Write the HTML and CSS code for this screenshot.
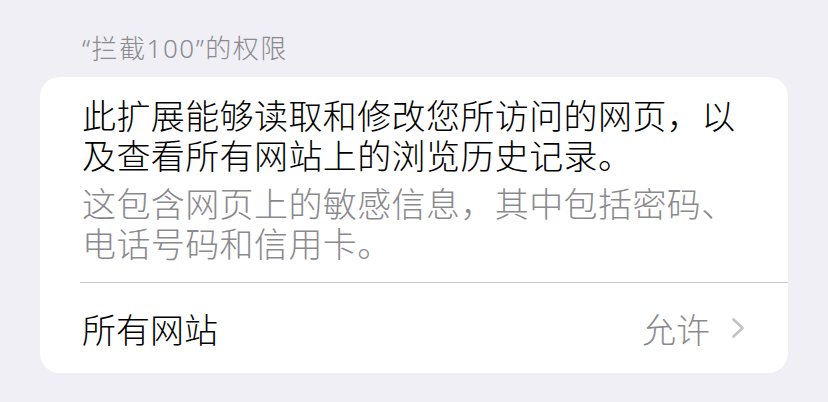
FILE: index.html
```html
<!DOCTYPE html>
<html lang="zh-CN">
<head>
<meta charset="utf-8">
<link rel="stylesheet" href="styles.css">
</head>
<body>
<div class="page">
  <div class="section-title">“拦截100”的权限</div>
  <div class="card">
    <div class="info">
      <p class="primary">此扩展能够读取和修改您所访问的网页，以及查看所有网站上的浏览历史记录。</p>
      <p class="secondary">这包含网页上的敏感信息，其中包括密码、电话号码和信用卡。</p>
    </div>
    <div class="row">
      <span class="row-label">所有网站</span>
      <span class="row-value">允许
        <svg class="chevron" width="16" height="22" viewBox="0 0 16 22"><path d="M3.5 2.5 L12.5 11 L3.5 19.5" fill="none" stroke="#c4c4c7" stroke-width="2.8" stroke-linecap="round" stroke-linejoin="round"/></svg>
      </span>
    </div>
  </div>
</div>
</body>
</html>
```

FILE: styles.css
```css
html, body {
  margin: 0;
  padding: 0;
  background: #f0eff5;
}
body {
  font-family: "Noto Sans CJK SC", "Noto Sans", sans-serif;
  width: 828px;
  height: 402px;
  overflow: hidden;
}
.page {
  padding: 31px 40px 0 40px;
}
.section-title {
  padding-left: 42px;
  font-family: "Noto Sans", "Noto Sans CJK SC", sans-serif;
  font-weight: 300;
  font-size: 26px;
  line-height: 34px;
  letter-spacing: 1.5px;
  color: #8a8a8e;
  height: 46px;
}
.card {
  background: #ffffff;
  border-radius: 20px;
  width: 748px;
  overflow: hidden;
}
.info {
  padding: 18px 40px 19px 2px;
  border-bottom: 1px solid #c8c8cb;
  margin-left: 40px;
}
.info p {
  margin: 0;
  font-size: 34px;
  line-height: 40px;
  letter-spacing: 0.4px;
  font-weight: 300;
}
.primary {
  color: #000000;
}
.secondary {
  color: #8a8a8e;
  margin-top: 8px !important;
}
.row {
  height: 90px;
  display: flex;
  align-items: center;
  justify-content: space-between;
  padding: 0 42px 0 42px;
}
.row-label {
  font-size: 34px;
  font-weight: 300;
  color: #000;
}
.row-value {
  display: flex;
  align-items: center;
  gap: 20px;
  font-size: 34px;
  font-weight: 300;
  color: #8a8a8e;
}
.chevron {
  display: block;
}
```
